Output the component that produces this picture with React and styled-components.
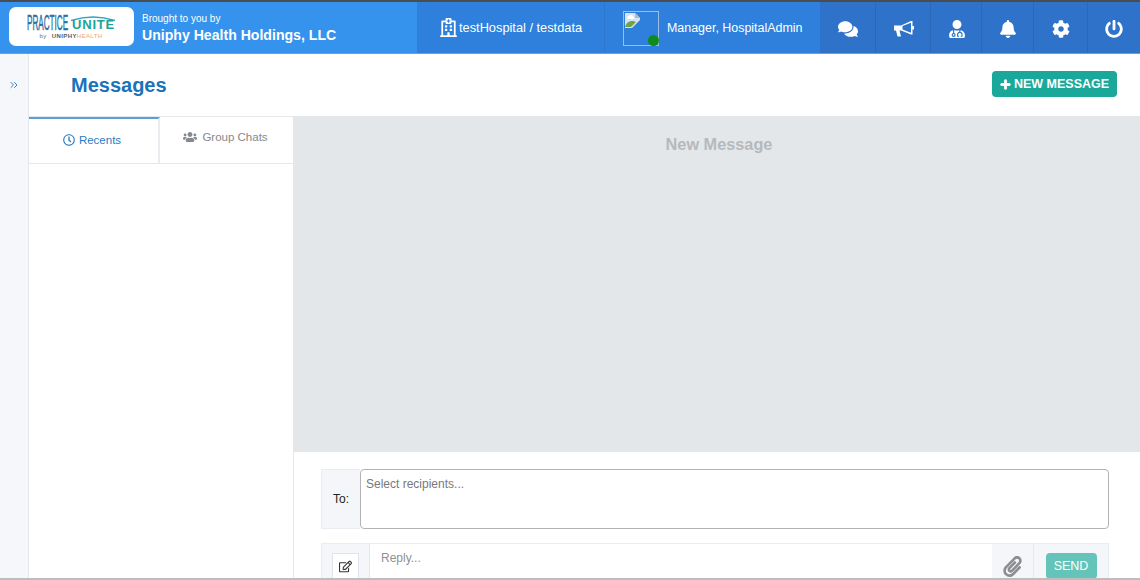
import React from "react";
import styled, { createGlobalStyle } from "styled-components";
import {
  FaBell,
  FaCog,
  FaComments,
  FaPaperclip,
  FaPlus,
  FaPowerOff,
  FaRegClock,
  FaRegEdit,
  FaRegHospital,
  FaUserMd,
  FaUsers,
} from "react-icons/fa";
import { ChevronsRight } from "lucide-react";

const GlobalStyle = createGlobalStyle`
  html, body {
    margin: 0;
    padding: 0;
    background: #fff;
    overflow: hidden;
  }
  * {
    box-sizing: border-box;
  }
`;

const Screen = styled.div`
  width: 1140px;
  height: 580px;
  overflow: hidden;
  display: flex;
  flex-direction: column;
  font-family: "Liberation Sans", Arial, sans-serif;
  border-top: 2px solid #4a4d50;
  border-bottom: 2px solid #bdbdbd;
`;

const TopBar = styled.header`
  flex: 0 0 52px;
  display: flex;
  background: #3593ee;
  border-bottom: 1px solid #5ba5ee;
  color: #fff;
`;

const Brand = styled.div`
  width: 417px;
  display: flex;
  align-items: center;
  padding: 0 0 2px 9px;
`;

const LogoCard = styled.div`
  width: 125px;
  height: 39px;
  background: #fff;
  border-radius: 7px;
  display: flex;
  flex-direction: column;
  align-items: center;
  position: relative;
  padding: 7px 1px 0 0;
`;

const LogoRow = styled.div`
  display: flex;
  align-items: center;
  height: 18px;
  gap: 4px;
`;

const LogoPractice = styled.span`
  display: inline-block;
  font-size: 22px;
  line-height: 18px;
  color: #2b6f9f;
  width: 41px;
  transform: scaleX(0.37);
  transform-origin: left center;
  white-space: nowrap;
  -webkit-text-stroke: 0.5px #2b6f9f;
`;

const LogoUnite = styled.span`
  font-size: 13px;
  line-height: 18px;
  font-weight: 700;
  letter-spacing: 0.8px;
  color: #1ba596;
  margin-top: 3px;
`;

const LogoArc = styled.svg`
  position: absolute;
  left: 62px;
  top: 9px;
`;

const LogoSub = styled.div`
  font-size: 6px;
  line-height: 8px;
  color: #6b6f74;
  letter-spacing: 0.4px;

  b {
    color: #55595e;
    margin-left: 3px;
  }
  em {
    font-style: normal;
    color: #f2a66a;
  }
`;

const BrandText = styled.div`
  margin: 3px 0 0 8px;
  display: flex;
  flex-direction: column;
`;

const BroughtBy = styled.div`
  font-size: 10px;
  line-height: 12px;
`;

const BrandName = styled.div`
  font-size: 14.1px;
  line-height: 16px;
  font-weight: 700;
  margin-top: 2px;
`;

const ContextBar = styled.div`
  width: 403px;
  display: flex;
  background: #2e80dc;
`;

const HospitalCell = styled.div`
  width: 188px;
  display: flex;
  align-items: center;
  padding-left: 22px;
  border-right: 1px solid #2c78cf;
  font-size: 12.8px;
  gap: 1px;
`;

const UserCell = styled.div`
  flex: 1;
  display: flex;
  align-items: center;
  padding-left: 18px;
  font-size: 12.45px;
  gap: 8px;
`;

const Avatar = styled.div`
  width: 36px;
  height: 35px;
  border: 1px solid #9cbde6;
  position: relative;
  margin-top: 1px;
  padding: 1px;
`;

const StatusDot = styled.span`
  position: absolute;
  right: -1px;
  bottom: -1px;
  width: 11px;
  height: 11px;
  border-radius: 50%;
  background: #0e8a1e;
`;

const IconBar = styled.nav`
  flex: 1;
  display: flex;
  background: #2e72c9;
`;

const IconCell = styled.div`
  width: ${(p) => p.$w}px;
  display: flex;
  align-items: center;
  justify-content: center;
  padding: 2px 0 0 ${(p) => p.$shift || 0}px;
  font-size: ${(p) => p.$size || 19}px;
  border-right: ${(p) => (p.$last ? "none" : "1px solid #2c68b8")};
`;

const Body = styled.div`
  flex: 1;
  min-height: 0;
  display: flex;
`;

const Rail = styled.aside`
  width: 29px;
  background: #f5f7fa;
  border-right: 1px solid #e3e7ec;
  display: flex;
  justify-content: center;
  padding-top: 25px;
  color: #3b80cc;
`;

const Main = styled.main`
  flex: 1;
  min-width: 0;
  display: flex;
  flex-direction: column;
`;

const TitleRow = styled.div`
  flex: 0 0 62px;
  display: flex;
  align-items: flex-start;
  justify-content: space-between;
  padding: 17px 23px 0 42px;
`;

const Title = styled.h1`
  margin: 2px 0 0;
  font-size: 20px;
  line-height: 24px;
  font-weight: 700;
  color: #1a73ba;
`;

const NewButton = styled.button`
  width: 125px;
  height: 26px;
  border: none;
  border-radius: 4px;
  background: #1aa89b;
  color: #fff;
  font-family: inherit;
  font-size: 12.5px;
  font-weight: 700;
  display: flex;
  align-items: center;
  justify-content: center;
  gap: 3px;
  padding: 0;
  white-space: nowrap;

  svg {
    font-size: 11px;
    stroke: currentColor;
    stroke-width: 40;
  }
`;

const Content = styled.div`
  flex: 1;
  min-height: 0;
  display: flex;
  border-top: 1px solid #e4e7ec;
`;

const SidePanel = styled.section`
  width: 265px;
  border-right: 1px solid #e4e7ec;
`;

const Tabs = styled.div`
  height: 47px;
  display: flex;
  border-bottom: 1px solid #e4e7ec;
`;

const Tab = styled.div`
  flex: ${(p) => (p.$active ? "0 0 131px" : "1")};
  display: flex;
  align-items: center;
  justify-content: center;
  gap: ${(p) => (p.$active ? 4 : 5)}px;
  font-size: 11.5px;
  color: ${(p) => (p.$active ? "#2a7cc4" : "#85888c")};
  border-top: ${(p) => (p.$active ? "2px solid #5b9fd6" : "none")};
  border-right: ${(p) => (p.$active ? "2px solid #e8ebef" : "none")};
  padding: ${(p) => (p.$active ? "0 3px 3px 0" : "0 2px 7px 0")};

  svg {
    font-size: ${(p) => (p.$active ? 12 : 14)}px;
  }
`;

const Thread = styled.section`
  flex: 1;
  min-width: 0;
  display: flex;
  flex-direction: column;
`;

const Conversation = styled.div`
  flex: 0 0 335px;
  background: #e4e7ea;
  display: flex;
  justify-content: center;
  padding: 18px 0 0 4px;
  font-size: 16.3px;
  line-height: 18px;
  font-weight: 700;
  color: #b6b9bb;
`;

const Composer = styled.div`
  padding: 17px 31px 0 27px;
  display: flex;
  flex-direction: column;
  gap: 14px;
`;

const ToRow = styled.div`
  height: 60px;
  display: flex;
`;

const ToLabel = styled.div`
  width: 39px;
  background: #f4f6f9;
  border: 1px solid #e9ecf1;
  border-right: none;
  display: flex;
  align-items: center;
  justify-content: center;
  font-size: 12px;
  color: #222;
`;

const ToInput = styled.div`
  flex: 1;
  border: 1px solid #b3b3b3;
  border-radius: 4px;
  padding: 7px 5px;
  font-size: 12px;
  line-height: 14px;
  color: #77797c;
`;

const ReplyRow = styled.div`
  height: 60px;
  display: flex;
  border: 1px solid #e9ecf1;
`;

const ReplyCell = styled.div`
  flex: 0 0 ${(p) => p.$w}px;
  background: #f4f6f9;
  border-right: ${(p) => (p.$divider ? "1px solid #e4e7ee" : "none")};
  display: flex;
  justify-content: center;
  padding-top: ${(p) => p.$top || 9}px;
  color: #8c8e91;
`;

const EditButton = styled.div`
  width: 27px;
  height: 27px;
  background: #fff;
  border: 1px solid #dfe3ea;
  color: #333;
  font-size: 13px;
  display: flex;
  align-items: center;
  justify-content: center;
`;

const ReplyInput = styled.div`
  flex: 1;
  background: #fff;
  padding: 7px 11px;
  font-size: 12px;
  line-height: 14px;
  color: #8f9194;
`;

const SendButton = styled.button`
  width: 51px;
  height: 26px;
  border: none;
  border-radius: 4px;
  background: #65c4b9;
  color: #fff;
  font-family: inherit;
  font-size: 12.5px;
  padding: 0;
`;

function BrokenImage() {
  return (
    <svg width="15" height="15" viewBox="0 0 15 15" style={{ display: "block" }}>
      <path d="M0 0h10l5 5v2l-8 8H0z" fill="#d6e3f4" />
      <path d="M10 0v5h5z" fill="#aebccd" />
      <path d="M2 5a2 2 0 0 1 2-2 2.5 2.5 0 0 1 4.5 1A1.5 1.5 0 0 1 9 6H3a1 1 0 0 1-1-1z" fill="#fff" />
      <path d="M0 14c1-4 4-6 7-6 1.500 0 3 .5 4 1l-5 5z" fill="#6ea544" />
    </svg>
  );
}

function Bullhorn() {
  return (
    <svg width="20" height="16" viewBox="0 0 20 16" fill="currentColor">
      <path
        fillRule="evenodd"
        d="M0 4.500H7L17 0h1.500v5H20v3.500h-1.500v5H17L7 9.500H5.500L7 15.500H3.500L2 9.500H0zM8.500 4.900V8.400L17 11.800V1.700z"
      />
    </svg>
  );
}

export default function App() {
  return (
    <Screen>
      <GlobalStyle />
      <TopBar>
        <Brand>
          <LogoCard>
            <LogoArc width="44" height="5" viewBox="0 0 44 5">
              <path d="M0 4.500C14 0 30 0 44 4.500" fill="none" stroke="#2f9fc4" strokeWidth="1.500" />
            </LogoArc>
            <LogoRow>
              <LogoPractice>PRACTICE</LogoPractice>
              <LogoUnite>UNITE</LogoUnite>
            </LogoRow>
            <LogoSub>
              by <b>UNIPHY</b>
              <em>HEALTH</em>
            </LogoSub>
          </LogoCard>
          <BrandText>
            <BroughtBy>Brought to you by</BroughtBy>
            <BrandName>Uniphy Health Holdings, LLC</BrandName>
          </BrandText>
        </Brand>
        <ContextBar>
          <HospitalCell>
            <FaRegHospital size={19} />
            testHospital / testdata
          </HospitalCell>
          <UserCell>
            <Avatar>
              <BrokenImage />
              <StatusDot />
            </Avatar>
            Manager, HospitalAdmin
          </UserCell>
        </ContextBar>
        <IconBar>
          <IconCell $w={56} $size={20} $shift={1}>
            <FaComments />
          </IconCell>
          <IconCell $w={55} $shift={1}>
            <Bullhorn />
          </IconCell>
          <IconCell $w={51} $size={18} $shift={1}>
            <FaUserMd />
          </IconCell>
          <IconCell $w={52} $size={18} $shift={1}>
            <FaBell />
          </IconCell>
          <IconCell $w={54} $size={18}>
            <FaCog />
          </IconCell>
          <IconCell $w={52} $size={18} $last>
            <FaPowerOff />
          </IconCell>
        </IconBar>
      </TopBar>
      <Body>
        <Rail>
          <ChevronsRight size={12} strokeWidth={2} />
        </Rail>
        <Main>
          <TitleRow>
            <Title>Messages</Title>
            <NewButton>
              <FaPlus />
              NEW MESSAGE
            </NewButton>
          </TitleRow>
          <Content>
            <SidePanel>
              <Tabs>
                <Tab $active>
                  <FaRegClock />
                  Recents
                </Tab>
                <Tab>
                  <FaUsers />
                  Group Chats
                </Tab>
              </Tabs>
            </SidePanel>
            <Thread>
              <Conversation>New Message</Conversation>
              <Composer>
                <ToRow>
                  <ToLabel>To:</ToLabel>
                  <ToInput>Select recipients...</ToInput>
                </ToRow>
                <ReplyRow>
                  <ReplyCell $w={48} $divider>
                    <EditButton>
                      <FaRegEdit />
                    </EditButton>
                  </ReplyCell>
                  <ReplyInput>Reply...</ReplyInput>
                  <ReplyCell $w={42} $divider $top={12}>
                    <FaPaperclip size={21} />
                  </ReplyCell>
                  <ReplyCell $w={74}>
                    <SendButton>SEND</SendButton>
                  </ReplyCell>
                </ReplyRow>
              </Composer>
            </Thread>
          </Content>
        </Main>
      </Body>
    </Screen>
  );
}
